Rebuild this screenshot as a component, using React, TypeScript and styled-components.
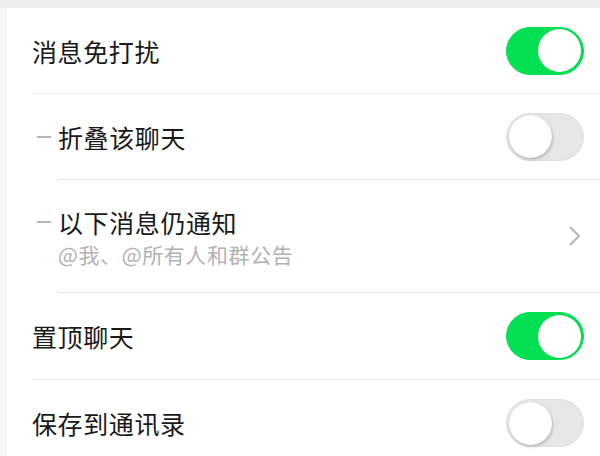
import styled, { createGlobalStyle, css } from 'styled-components';

const GlobalStyle = createGlobalStyle`
  html, body {
    margin: 0;
    padding: 0;
    background: #ededed;
  }
  body {
    font-family: "Noto Sans CJK SC", "Noto Sans", sans-serif;
    -webkit-font-smoothing: antialiased;
  }
`;

interface SettingItem {
  label: string;
  sub?: string;
  nested?: boolean;
  kind: 'switch' | 'link';
  on?: boolean;
  height: number;
}

const items: SettingItem[] = [
  { label: '消息免打扰', kind: 'switch', on: true, height: 85 },
  { label: '折叠该聊天', kind: 'switch', on: false, nested: true, height: 85 },
  { label: '以下消息仍通知', sub: '@我、@所有人和群公告', kind: 'link', nested: true, height: 112 },
  { label: '置顶聊天', kind: 'switch', on: true, height: 86 },
  { label: '保存到通讯录', kind: 'switch', on: false, height: 86 },
];

export default function App() {
  return (
    <>
      <GlobalStyle />
      <Page>
        <Panel>
          {items.map((item) => (
            <Row key={item.label} nested={!!item.nested} h={item.height}>
              <LabelBlock>
                <TitleLine>
                  {item.nested && <Dash />}
                  <Title>{item.label}</Title>
                </TitleLine>
                {item.sub && <Sub>{item.sub}</Sub>}
              </LabelBlock>
              {item.kind === 'switch' ? (
                <Switch on={!!item.on}>
                  <Knob on={!!item.on} />
                </Switch>
              ) : (
                <Chevron width="13" height="22" viewBox="0 0 13 22">
                  <polyline points="2,2 11,11 2,20" fill="none" stroke="#b2b2b2" strokeWidth="2" />
                </Chevron>
              )}
            </Row>
          ))}
        </Panel>
      </Page>
    </>
  );
}

const Page = styled.div`
  width: 600px;
  height: 456px;
  overflow: hidden;
  padding-top: 8px;
  padding-left: 7px;
  box-sizing: border-box;
  background: #f7f7f7;
  position: relative;

  &::before {
    content: '';
    position: absolute;
    top: 0;
    left: 0;
    right: 0;
    height: 8px;
    background: #ededed;
  }
`;

const Panel = styled.div`
  background: #ffffff;
  height: 100%;
  padding-left: 25px;
  display: flex;
  flex-direction: column;
`;

const Row = styled.div<{ nested: boolean; h: number }>`
  display: flex;
  align-items: center;
  justify-content: space-between;
  height: ${({ h }) => h}px;
  flex-shrink: 0;
  padding-right: 16px;
  border-bottom: 1px solid #ececec;
  ${({ nested }) =>
    nested &&
    css`
      margin-left: 26px;
      border-bottom-color: #e5e5e5;
    `}

  &:last-child {
    border-bottom: 0;
  }
`;

const LabelBlock = styled.div`
  display: flex;
  flex-direction: column;
`;

const TitleLine = styled.div`
  display: flex;
  align-items: center;
`;

const Dash = styled.span`
  display: block;
  width: 14px;
  height: 2px;
  background: #b5b5b5;
  margin-left: -21px;
  margin-right: 7px;
`;

const Title = styled.span`
  font-size: 25px;
  letter-spacing: 0.6px;
  line-height: 34px;
  color: #191919;
`;

const Sub = styled.span`
  font-size: 21px;
  letter-spacing: 0.6px;
  line-height: 28px;
  margin-top: 1px;
  color: #b2b2b2;
`;

const Switch = styled.div<{ on: boolean }>`
  width: 78px;
  height: 48px;
  border-radius: 24px;
  box-sizing: border-box;
  display: flex;
  align-items: center;
  padding: 0 2px;
  justify-content: ${({ on }) => (on ? 'flex-end' : 'flex-start')};
  background: ${({ on }) => (on ? '#05e053' : '#e6e6e6')};
  border: 1px solid ${({ on }) => (on ? '#05e053' : '#e0e0e0')};
`;

const Knob = styled.div<{ on: boolean }>`
  width: 43px;
  height: 43px;
  border-radius: 50%;
  background: #ffffff;
  box-shadow: ${({ on }) =>
    on ? '0 0 1px rgba(0,0,0,0.15)' : '1px 2px 3px rgba(0,0,0,0.18), 0 0 1px rgba(0,0,0,0.2)'};
`;

const Chevron = styled.svg`
  margin-right: 3px;
  display: block;
`;
